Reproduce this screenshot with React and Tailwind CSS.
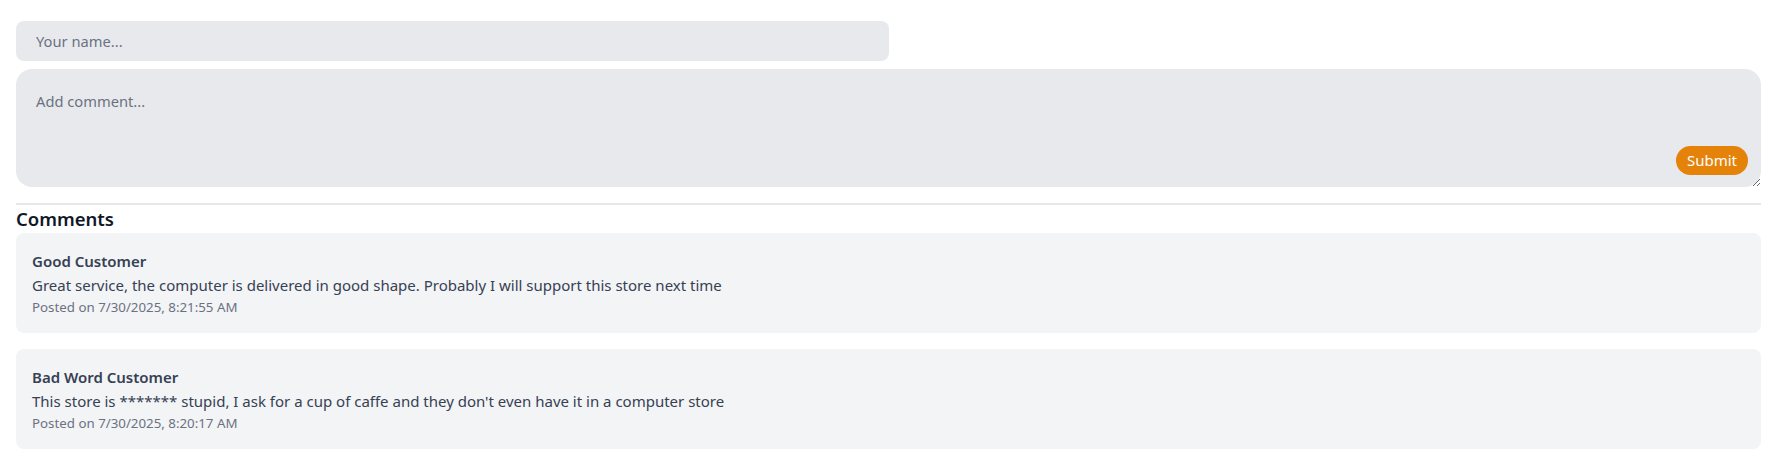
import { useState } from 'react';

const comments = [
  {
    name: 'Good Customer',
    text: 'Great service, the computer is delivered in good shape. Probably I will support this store next time',
    date: '7/30/2025, 8:21:55 AM',
  },
  {
    name: 'Bad Word Customer',
    text: "This store is ******* stupid, I ask for a cup of caffe and they don't even have it in a computer store",
    date: '7/30/2025, 8:20:17 AM',
  },
];

export default function App() {
  const [name, setName] = useState('');
  const [comment, setComment] = useState('');

  return (
    <div className="bg-white min-h-screen px-4 pt-[21px] font-['Segoe_UI','Noto_Sans',sans-serif]">
      {/* Form */}
      <input
        value={name}
        onChange={e => setName(e.target.value)}
        placeholder="Your name..."
        className="block w-1/2 h-10 px-5 mb-2 rounded-lg bg-[#e8e9ec] text-[14.7px] text-gray-800 placeholder:text-gray-500 outline-none"
      />
      <div className="relative">
        <textarea
          value={comment}
          onChange={e => setComment(e.target.value)}
          placeholder="Add comment..."
          className="block w-full h-[118px] px-5 pt-5 rounded-2xl bg-[#e8e9ec] text-[14.7px] leading-6 text-gray-800 placeholder:text-gray-500 outline-none"
        />
        <button className="absolute right-[13px] bottom-3 h-[29px] px-[11px] rounded-full bg-[#e4820a] text-white text-[15px] leading-none">
          Submit
        </button>
      </div>

      <hr className="mt-4 border-t-2 border-gray-200" />

      {/* Comments */}
      <h2 className="text-[18.5px] font-semibold text-gray-900 leading-7">Comments</h2>
      <div className="flex flex-col gap-4">
        {comments.map(c => (
          <div key={c.date} className="bg-gray-100 rounded-lg px-4 pt-4 h-[100px]">
            <div className="text-[15px] font-semibold text-gray-700 leading-6">{c.name}</div>
            <div className="text-[15px] text-gray-700 leading-6">{c.text}</div>
            <div className="text-[13.3px] text-gray-500 leading-5">Posted on {c.date}</div>
          </div>
        ))}
      </div>
    </div>
  );
}
